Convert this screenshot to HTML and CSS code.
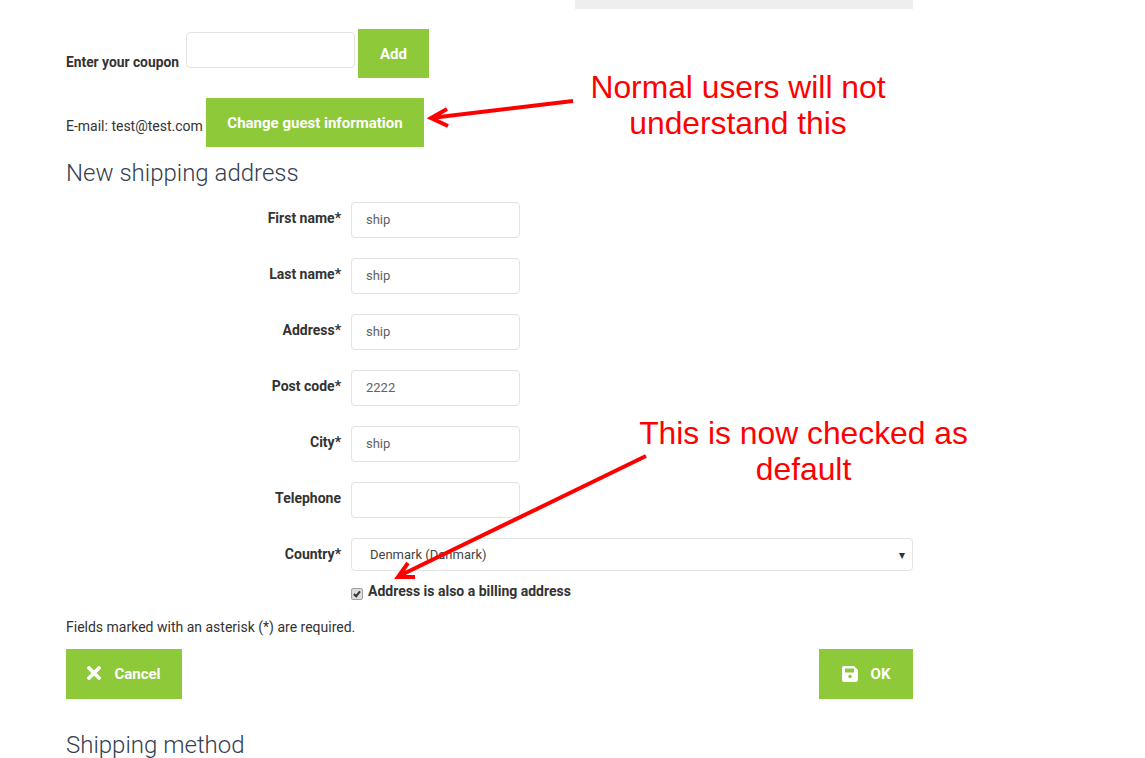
FILE: index.html
```html
<!DOCTYPE html>
<html>

<head>
<link rel="stylesheet" href="styles.css">
</head>

<body>
	<div class="page">
		<div class="topbar"></div>

		<!--Coupon-->
		<div class="coupon">
			<label class="coupon-label">Enter your coupon</label>
			<input class="coupon-input" type="text">
			<button class="btn btn-add">Add</button>
		</div>

		<!--Guest info-->
		<div class="guest">
			<span class="guest-mail">E-mail: test@test.com</span>
			<button class="btn btn-guest">Change guest information</button>
		</div>

		<h2 class="title title-address">New shipping address</h2>

		<!--Address form-->
		<form action="">
			<div class="row">
				<label>First name*</label><input type="text" value="ship">
			</div>
			<div class="row">
				<label>Last name*</label><input type="text" value="ship">
			</div>
			<div class="row">
				<label>Address*</label><input type="text" value="ship">
			</div>
			<div class="row">
				<label>Post code*</label><input type="text" value="2222">
			</div>
			<div class="row">
				<label>City*</label><input type="text" value="ship">
			</div>
			<div class="row">
				<label>Telephone</label><input type="text">
			</div>
			<div class="row row-country">
				<label>Country*</label>
				<div class="select">
					<span>Denmark (Danmark)</span>
					<span class="caret">&#9662;</span>
				</div>
			</div>
			<div class="billing">
				<input type="checkbox" checked>
				<label>Address is also a billing address</label>
			</div>
		</form>

		<p class="required">Fields marked with an asterisk (*) are required.</p>

		<div class="actions">
			<button class="btn btn-action btn-cancel">
				<svg class="icon icon-x" width="14" height="14" viewBox="0 0 14 14"><path d="M2 2 L12 12 M12 2 L2 12" stroke="#fff" stroke-width="3.8" stroke-linecap="round" fill="none"/></svg>
				Cancel
			</button>
			<button class="btn btn-action btn-ok">
				<svg class="icon" width="16" height="16" viewBox="0 0 16 16"><path fill="#fff" fill-rule="evenodd" d="M2 0 H12 L16 4 V14 A2 2 0 0 1 14 16 H2 A2 2 0 0 1 0 14 V2 A2 2 0 0 1 2 0 Z M3 2.5 V6.5 H12 V2.5 Z M8 8.7 A1.8 1.8 0 1 0 8 12.3 A1.8 1.8 0 1 0 8 8.7 Z"/></svg>
				OK
			</button>
		</div>

		<h2 class="title title-method">Shipping method</h2>
	</div>

	<!--Red notes on top of the page-->
	<div class="note note-one">Normal users will not<br>understand this</div>
	<div class="note note-two">This is now checked as<br>default</div>
	<svg class="arrows" width="1145" height="758" viewBox="0 0 1145 758">
		<path d="M573 101 L431 118 M447 109 L431 118 L448 126" stroke="#f00" stroke-width="4" fill="none"/>
		<path d="M646 456 L399 576 M408 563 L398 577 L415 577" stroke="#f00" stroke-width="4" fill="none"/>
	</svg>
</body>

</html>
```

FILE: styles.css
```css
html, body {
    height: 758px;
    overflow: hidden;
}
body {
    margin: 0;
    background-color: #fff;
    color: #333;
    font-family: Roboto, "Liberation Sans", sans-serif;
    font-size: 14px;
}
.page {
    width: 847px;
    padding-left: 66px;
}
.topbar {
    height: 9px;
    width: 338px;
    margin-left: auto;
    background-color: #eee;
}

/* Green buttons */
.btn {
    border: none;
    background-color: #8dc939;
    color: #fff;
    font-family: inherit;
    font-size: 15px;
    font-weight: 700;
    padding: 0;
}

/* Coupon */
.coupon {
    display: flex;
    align-items: flex-start;
    margin-top: 20px;
    height: 49px;
}
.coupon-label {
    font-size: 13.8px;
    font-weight: 700;
    width: 120px;
    margin-top: 25px;
    line-height: 16px;
}
.coupon-input {
    width: 169px;
    height: 36px;
    margin-top: 3px;
    box-sizing: border-box;
    border: 1px solid #e3e3e3;
    border-radius: 4px;
}
.btn-add {
    width: 71px;
    height: 49px;
    margin-left: 3px;
}

/* Guest */
.guest {
    display: flex;
    align-items: flex-start;
    margin-top: 20px;
    height: 49px;
}
.guest-mail {
    width: 140px;
    margin-top: 20px;
    line-height: 16px;
}
.btn-guest {
    width: 218px;
    height: 49px;
}

.title {
    margin: 0;
    font-size: 24px;
    font-weight: 300;
    line-height: 26px;
    color: #34404f;
}
.title-address {
    margin-top: 13px;
    margin-bottom: 16px;
}
.title-method {
    margin-top: 33px;
}

/* Form rows */
.row {
    display: flex;
    height: 36px;
    margin-bottom: 20px;
}
.row label {
    width: 285px;
    padding-right: 10px;
    box-sizing: border-box;
    text-align: right;
    font-size: 14px;
    font-weight: 700;
    line-height: 32px;
}
.row input {
    width: 169px;
    height: 36px;
    box-sizing: border-box;
    border: 1px solid #e3e3e3;
    border-radius: 4px;
    padding: 0 14px 2px;
    font-family: inherit;
    font-size: 13px;
    color: #5f6368;
}
.row-country {
    height: 33px;
    margin-bottom: 0;
}
.select {
    flex: 1;
    display: flex;
    justify-content: space-between;
    align-items: center;
    box-sizing: border-box;
    height: 33px;
    border: 1px solid #e3e3e3;
    border-radius: 4px;
    padding: 0 7px 0 18px;
    font-size: 13px;
    color: #444;
}
.caret {
    font-size: 12px;
    color: #333;
}

.billing {
    display: flex;
    align-items: flex-start;
    margin: 11px 0 0 285px;
    height: 18px;
}
.billing input {
    appearance: none;
    position: relative;
    box-sizing: border-box;
    width: 12px;
    height: 12px;
    margin: 6px 5px 0 0;
    border: 1px solid #a0a0a0;
    border-radius: 2px;
    background-color: #dcdcdc;
}
/* the tick */
.billing input::after {
    content: "";
    position: absolute;
    left: 3px;
    top: 1px;
    width: 2px;
    height: 5px;
    border-right: 2px solid #333;
    border-bottom: 2px solid #333;
    transform: rotate(40deg);
}
.billing label {
    font-size: 14px;
    font-weight: 700;
    line-height: 18px;
}

.required {
    margin: 19px 0 0;
    line-height: 16px;
}

/* Cancel / OK */
.actions {
    display: flex;
    justify-content: space-between;
    margin-top: 14px;
}
.btn-action {
    display: flex;
    align-items: center;
    justify-content: center;
    height: 50px;
}
.btn-cancel {
    width: 116px;
}
.btn-ok {
    width: 94px;
}
.icon {
    margin-right: 13px;
}
.icon-x {
    margin-bottom: 2px;
}

/* Annotations */
.note {
    position: absolute;
    color: #f00;
    font-family: "Liberation Sans", Arial, sans-serif;
    font-size: 31.8px;
    line-height: 36px;
    text-align: center;
}
.note-one {
    left: 588px;
    top: 69px;
    width: 300px;
}
.note-two {
    left: 638px;
    top: 415px;
    width: 331px;
}
.arrows {
    position: absolute;
    left: 0;
    top: 0;
    pointer-events: none;
}
```
